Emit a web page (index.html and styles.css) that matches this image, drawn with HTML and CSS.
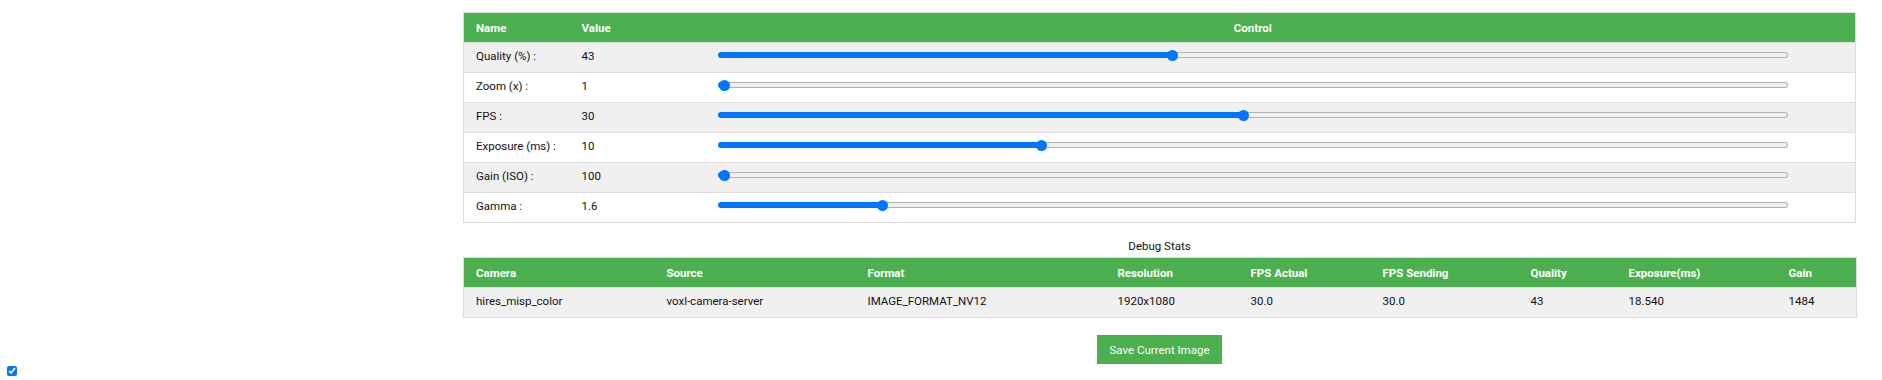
FILE: index.html
```html
<!DOCTYPE html>
<html lang="en">
<head>
    <meta charset="UTF-8">
    <meta name="viewport" content="width=device-width, initial-scale=1.0">
    <title>Camera</title>
    <link rel="stylesheet" href="styles.css">
</head>
<body>

<div class="page">
    <div class="stream"></div>

    <div class="panel">
        <table class="controls">
            <colgroup>
                <col class="col-name">
                <col class="col-value">
                <col>
            </colgroup>
            <tr>
                <th>Name</th>
                <th>Value</th>
                <th class="center">Control</th>
            </tr>
            <tr>
                <td>Quality (%) :</td>
                <td id="quality-val">43</td>
                <td><input type="range" id="quality" min="1" max="100" step="1" value="43"></td>
            </tr>
            <tr>
                <td>Zoom (x) :</td>
                <td id="zoom-val">1</td>
                <td><input type="range" id="zoom" min="1" max="10" step="1" value="1"></td>
            </tr>
            <tr>
                <td>FPS :</td>
                <td id="fps-val">30</td>
                <td><input type="range" id="fps" min="1" max="60" step="1" value="30"></td>
            </tr>
            <tr>
                <td>Exposure (ms) :</td>
                <td id="exposure-val">10</td>
                <td><input type="range" id="exposure" min="1" max="31" step="1" value="10"></td>
            </tr>
            <tr>
                <td>Gain (ISO) :</td>
                <td id="gain-val">100</td>
                <td><input type="range" id="gain" min="100" max="3200" step="1" value="100"></td>
            </tr>
            <tr>
                <td>Gamma :</td>
                <td id="gamma-val">1.6</td>
                <td><input type="range" id="gamma" min="1" max="5" step="0.1" value="1.6"></td>
            </tr>
        </table>

        <div class="caption">Debug Stats</div>
        <table class="stats">
            <colgroup>
                <col style="width: 191px">
                <col style="width: 201px">
                <col style="width: 250px">
                <col style="width: 133px">
                <col style="width: 132px">
                <col style="width: 148px">
                <col style="width: 98px">
                <col style="width: 160px">
                <col style="width: 80px">
            </colgroup>
            <tr>
                <th>Camera</th>
                <th>Source</th>
                <th>Format</th>
                <th>Resolution</th>
                <th>FPS Actual</th>
                <th>FPS Sending</th>
                <th>Quality</th>
                <th>Exposure(ms)</th>
                <th>Gain</th>
            </tr>
            <tr>
                <td>hires_misp_color</td>
                <td>voxl-camera-server</td>
                <td>IMAGE_FORMAT_NV12</td>
                <td>1920x1080</td>
                <td>30.0</td>
                <td>30.0</td>
                <td>43</td>
                <td>18.540</td>
                <td>1484</td>
            </tr>
        </table>

        <div class="actions">
            <button id="saveImage">Save Current Image</button>
        </div>
    </div>
</div>

<div class="footer">
    <input type="checkbox" id="overlay" checked>
</div>

<script>
    // Fill the track up to the thumb and keep the value column in sync
    function paintSlider(slider) {
        const min = parseFloat(slider.min);
        const max = parseFloat(slider.max);
        const f = (parseFloat(slider.value) - min) / (max - min);
        slider.style.setProperty('--f', f);
    }

    document.querySelectorAll('input[type=range]').forEach(slider => {
        paintSlider(slider);
        slider.addEventListener('input', () => {
            paintSlider(slider);
            document.getElementById(slider.id + '-val').textContent = slider.value;
        });
    });
</script>

</body>
</html>
```

FILE: styles.css
```css
body {
    font-family: Roboto, "Noto Sans", Arial, sans-serif;
    font-size: 11.5px;
    color: #111;
    margin: 0;
}
.page {
    display: grid;
    grid-template-columns: 463px 1393px;
    padding-top: 12px;
}
table {
    width: 100%;
    border-collapse: collapse;
    table-layout: fixed;
    border: 1px solid #ddd;
}
th, td {
    height: 29px;
    padding: 0 12px;
    text-align: left;
    vertical-align: middle;
    white-space: nowrap;
}
th {
    background-color: #4CAF50;
    color: white;
    font-weight: bold;
}
td {
    height: 26px;
    border-top: 1px solid #ddd;
    padding-bottom: 3px;
}
tr:nth-child(even) {
    background-color: #f0f0f0;
}
.center {
    text-align: center;
}
.col-name {
    width: 106px;
}
.col-value {
    width: 81px;
}
.caption {
    text-align: center;
    line-height: 15px;
    margin: 16px 0 3px;
}
.actions {
    text-align: center;
    margin-top: 17px;
}
button {
    display: inline-block;
    vertical-align: top;
    background-color: #4CAF50;
    color: white;
    font-family: inherit;
    font-size: 11.5px;
    height: 29px;
    padding: 0 12px;
    border: none;
    cursor: pointer;
}
button:hover {
    background-color: #45a049;
}

/* range sliders */
input[type=range] {
    -webkit-appearance: none;
    appearance: none;
    display: block;
    width: 1070px;
    height: 11px;
    margin: 0 auto 2px;
    background: transparent;
}
input[type=range]::-webkit-slider-runnable-track {
    box-sizing: border-box;
    height: 6px;
    border: 1px solid transparent;
    border-radius: 3px;
    background:
        linear-gradient(to right, #0075ff calc(5.5px + var(--f, 0) * (100% - 11px)), transparent 0) border-box,
        linear-gradient(#efefef, #efefef) padding-box,
        border-box #b2b2b2;
}
input[type=range]::-webkit-slider-thumb {
    -webkit-appearance: none;
    width: 11px;
    height: 11px;
    margin-top: -3.5px;
    border: none;
    border-radius: 50%;
    background: #0075ff;
}

.footer {
    display: flex;
    padding: 2px 0 0 7px;
}
.footer input {
    width: 10px;
    height: 10px;
    margin: 0;
    accent-color: #0075ff;
}
```
